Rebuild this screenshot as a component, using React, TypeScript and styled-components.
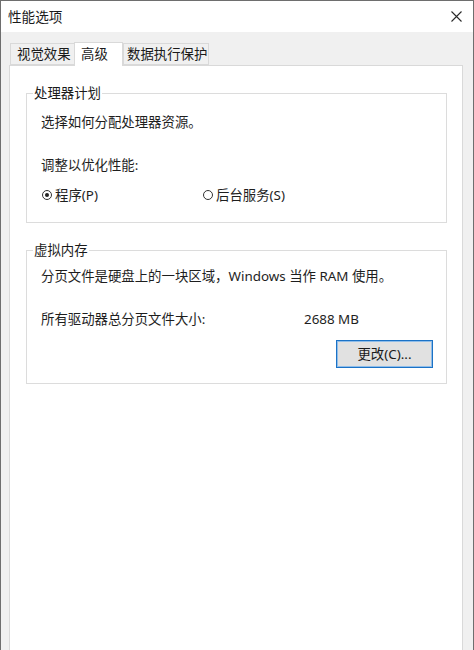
import React from "react";
import styled, { createGlobalStyle } from "styled-components";

const Global = createGlobalStyle`
  html, body { margin: 0; padding: 0; background: #f0f0f0; }
  body { font-family: "Noto Sans", "Noto Sans CJK SC", sans-serif; font-size: 13.4px; color: #1e1e1e; }
  * { box-sizing: border-box; }
`;

const Window = styled.div`
  width: 474px;
  height: 650px;
  display: flex;
  flex-direction: column;
  background: #f0f0f0;
  border: 1px solid #6e6e6e;
  border-bottom: none;
  overflow: hidden;
`;

const TitleBar = styled.div`
  height: 31px;
  flex: none;
  background: #ffffff;
  display: flex;
  align-items: center;
  justify-content: space-between;
  padding: 0 11px 1px 7px;
  font-size: 13.6px;
  color: #1a1a1a;
`;

const CloseButton = styled.div`
  width: 12px;
  height: 12px;
  display: flex;
  align-items: center;
  justify-content: center;
`;

const Body = styled.div`
  flex: 1;
  display: flex;
  flex-direction: column;
  padding: 10px 10px 0 8px;
  min-height: 0;
`;

const TabStrip = styled.div`
  display: flex;
  align-items: flex-end;
  height: 23px;
  flex: none;
  padding-left: 1px;
`;

const Tab = styled.div<{ $w: number; $active?: boolean; $pl: number }>`
  width: ${(p) => p.$w}px;
  height: ${(p) => (p.$active ? 24 : 22)}px;
  margin-bottom: ${(p) => (p.$active ? -1 : 0)}px;
  position: relative;
  z-index: ${(p) => (p.$active ? 1 : 0)};
  background: ${(p) => (p.$active ? "#ffffff" : "#f0f0f0")};
  border: 1px solid #d9d9d9;
  border-bottom: ${(p) => (p.$active ? "none" : "1px solid #d9d9d9")};
  ${(p) => (p.$active ? "" : "border-right: none;")}
  padding-left: ${(p) => p.$pl}px;
  padding-top: ${(p) => (p.$active ? 2 : 1)}px;
  line-height: 18px;
  font-size: 13.4px;
  white-space: nowrap;
  color: #1a1a1a;
  &:last-child { border-right: 1px solid #d9d9d9; }
`;

const Panel = styled.div`
  flex: 1;
  background: #ffffff;
  border: 1px solid #d9d9d9;
  border-bottom: none;
  padding: 18px 15px 0 16px;
  display: flex;
  flex-direction: column;
  gap: 18px;
`;

const GroupBox = styled.fieldset<{ $pt: number; $pb: number }>`
  margin: 0;
  border: 1px solid #dcdcdc;
  padding: ${(p) => p.$pt}px 13px ${(p) => p.$pb}px 14px;
  min-width: 0;
`;

const Legend = styled.legend`
  margin-left: -8px;
  padding: 0 1px;
  line-height: 18px;
  font-size: 13.4px;
  color: #1a1a1a;
`;

const Line = styled.div<{ $mt?: number }>`
  line-height: 18px;
  margin-top: ${(p) => p.$mt ?? 0}px;
  white-space: nowrap;
`;

const RadioRow = styled.div`
  display: flex;
  margin-top: 12px;
  line-height: 18px;
`;

const RadioOption = styled.label<{ $w?: number }>`
  display: flex;
  align-items: center;
  gap: 3px;
  ${(p) => (p.$w ? `width: ${p.$w}px;` : "")}
`;

const RadioCircle = styled.span<{ $checked?: boolean }>`
  width: 10px;
  height: 10px;
  margin-left: 1px;
  border-radius: 50%;
  border: 1px solid #333333;
  background: #ffffff;
  display: flex;
  align-items: center;
  justify-content: center;
  &::after {
    content: "";
    width: 4px;
    height: 4px;
    border-radius: 50%;
    background: ${(p) => (p.$checked ? "#222222" : "transparent")};
  }
`;

const InfoRow = styled.div`
  display: grid;
  grid-template-columns: 263px 1fr;
  line-height: 18px;
  margin-top: 25px;
`;

const ButtonRow = styled.div`
  display: flex;
  justify-content: flex-end;
  margin-top: 12px;
`;

const Button = styled.button`
  width: 97px;
  height: 28px;
  background: #e1e1e1;
  border: 1px solid #1b72c6;
  box-shadow: inset 0 0 0 1px #8fbde9;
  font-family: "Noto Sans", "Noto Sans CJK SC", sans-serif;
  font-size: 13.4px;
  color: #1a1a1a;
  padding: 0 0 1px;
  line-height: 18px;
`;

export default function App() {
  return (
    <>
      <Global />
      <Window>
        <TitleBar>
          <span>性能选项</span>
          <CloseButton>
            <svg width="11" height="11" viewBox="0 0 11 11">
              <path d="M0.5 0.5 L10.5 10.5 M10.5 0.5 L0.5 10.5" stroke="#2a2a2a" strokeWidth="1.1" fill="none" />
            </svg>
          </CloseButton>
        </TitleBar>
        <Body>
          <TabStrip>
            <Tab $w={64} $pl={6}>视觉效果</Tab>
            <Tab $w={49} $pl={6} $active>高级</Tab>
            <Tab $w={86} $pl={3}>数据执行保护</Tab>
          </TabStrip>
          <Panel>
            <GroupBox $pt={11} $pb={18}>
              <Legend>处理器计划</Legend>
              <Line>选择如何分配处理器资源。</Line>
              <Line $mt={25}>调整以优化性能:</Line>
              <RadioRow>
                <RadioOption $w={161}>
                  <RadioCircle $checked />
                  <span>程序(P)</span>
                </RadioOption>
                <RadioOption>
                  <RadioCircle />
                  <span>后台服务(S)</span>
                </RadioOption>
              </RadioRow>
            </GroupBox>
            <GroupBox $pt={8} $pb={15}>
              <Legend>虚拟内存</Legend>
              <Line>分页文件是硬盘上的一块区域，Windows 当作 RAM 使用。</Line>
              <InfoRow>
                <span>所有驱动器总分页文件大小:</span>
                <span>2688 MB</span>
              </InfoRow>
              <ButtonRow>
                <Button>更改(C)...</Button>
              </ButtonRow>
            </GroupBox>
          </Panel>
        </Body>
      </Window>
    </>
  );
}
